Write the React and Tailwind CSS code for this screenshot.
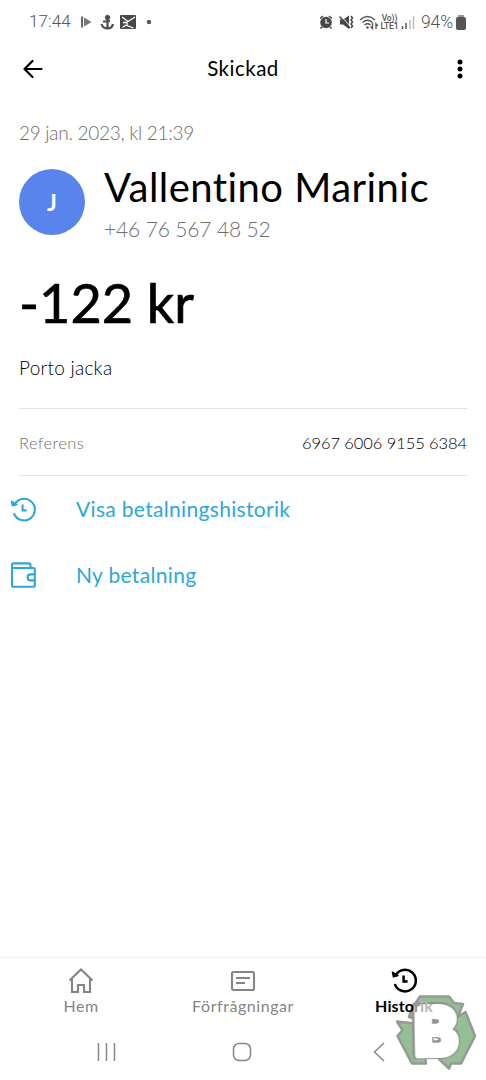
import React from "react";

const HistoryIcon = ({ className, strokeWidth = 2.1 }) => (
  <svg
    className={className}
    viewBox="0 0 26 26"
    fill="none"
    stroke="currentColor"
    strokeWidth={strokeWidth}
    strokeLinecap="round"
    strokeLinejoin="round"
  >
    <path d="M4.6 8.4A10.8 10.8 0 1 1 4.2 18" />
    <path d="M1.4 5.2 2.4 9.8 7 8.6Z" fill="currentColor" strokeWidth="1.4" />
    <path d="M12.6 8.4V14.4H16.6" strokeLinecap="butt" strokeLinejoin="miter" />
  </svg>
);

const WalletIcon = () => (
  <svg
    className="h-[26px] w-[26px]"
    viewBox="0 0 26 26"
    fill="none"
    stroke="currentColor"
    strokeWidth="2.1"
    strokeLinejoin="round"
  >
    <path d="M20.5 6V2.8Q20.5 1.4 19.1 1.4H3.4Q2 1.4 2 2.8V23.2Q2 24.8 3.6 24.8H23.2Q24.8 24.8 24.8 23.2V7.4Q24.8 6 23.4 6H2.4" />
    <path d="M24.8 12.4H20.6A3 3 0 0 0 20.6 18.4H24.8" />
  </svg>
);

const StatusBar = () => (
  <header className="flex h-[44px] items-center pl-[29px] pr-5 text-[#555]">
    <span className="w-[42px] font-[Roboto] text-[17px] font-light tracking-[0.1px]">
      17:44
    </span>
    <svg className="ml-[8px] h-5 w-[76px]" viewBox="0 0 76 20">
      <path d="M3 4.5V15.5" stroke="#555" strokeWidth="1.8" />
      <path d="M5 5.5 12.500 10 5 14.5Z" fill="#777" />
      <g fill="none" stroke="#4c4c4c" strokeWidth="2.2">
        <circle cx="28.500" cy="5.500" r="2.200" fill="#4c4c4c" strokeWidth="1" />
        <path d="M28.500 7V16M24 9.500 31 9M22.500 12Q24 16.500 28.500 16.500T34 12" />
      </g>
      <rect x="41" y="3" width="16" height="14" rx="1" fill="#484848" />
      <path
        d="M43 5 49 9.500 56 5M44 10.500H48V13.500L54.500 16M43.500 15.500 47 13"
        fill="none"
        stroke="white"
        strokeWidth="1.3"
      />
      <circle cx="70" cy="10" r="2.2" fill="#555" />
    </svg>
    <div className="ml-auto flex items-center">
      <svg className="h-5 w-[60px]" viewBox="0 0 60 20">
        <circle cx="6" cy="10.500" r="5.800" fill="#484848" />
        <path d="M0 6.500 3 4M9 4 12 6.500M2 15 .5 16.500M10 15 11.500 16.500" stroke="#484848" strokeWidth="1.600" />
        <path d="M6 7V11H9" fill="none" stroke="white" strokeWidth="1.200" />
        <path d="M20 7.500H23L29 3.500V17L23 12.500H20Z" fill="#484848" />
        <path d="M20.500 3.500 31 15" stroke="white" strokeWidth="1" />
        <path d="M19.500 4.500 30 16" stroke="#484848" strokeWidth="1.500" />
        <path d="M31 4 32.500 6 31 8 32.500 10 31 12 32.500 14 31 16" fill="none" stroke="#484848" strokeWidth="1.500" />
        <g fill="none" stroke="#555" strokeWidth="1.400">
          <path d="M40 8Q47.500 1 55 8M42.500 10.500Q47.500 6 52.500 10.500M44.500 13Q47.500 10.500 50.500 13" />
          <path d="M52.500 11V16.500L50.500 14.500M56 17V12L58 14" />
        </g>
        <circle cx="47.500" cy="15.500" r="1.300" fill="#555" />
      </svg>
      <div className="w-[19px] text-center font-[Roboto] text-[8.5px] leading-[8px] font-medium tracking-[-0.1px]">
        Vo))
        <br />
        LTE1
      </div>
      <svg className="ml-[2px] h-5 w-[14px]" viewBox="0 0 14 20" fill="none" strokeWidth="1.500">
        <path d="M1.500 14V17M5 11V17" stroke="#555" />
        <path d="M9 8V17M12.500 4V17" stroke="#bbb" />
      </svg>
      <span className="ml-[6px] w-[35px] font-[Roboto] text-[17.5px] font-light tracking-[-0.1px]">
        94%
      </span>
      <span className="relative mt-[2px] h-[13px] w-[10px] rounded-[2px] bg-[#555] before:absolute before:-top-[2px] before:left-[2px] before:h-[2px] before:w-[6px] before:bg-[#999]" />
    </div>
  </header>
);

const TopBar = () => (
  <div className="flex h-[50px] items-center justify-between px-[23px]">
    <svg className="h-5 w-5" viewBox="0 0 20 20" fill="none" stroke="black" strokeWidth="2.2" strokeLinecap="round" strokeLinejoin="round">
      <path d="M9.500 2 1.500 10 9.500 18M1.500 10H18.500" />
    </svg>
    <h1 className="-mt-[2px] text-[20.5px] tracking-[0.5px]">Skickad</h1>
    <svg className="h-5 w-5" viewBox="0 0 20 20">
      <circle cx="17" cy="3" r="2.500" />
      <circle cx="17" cy="10" r="2.500" />
      <circle cx="17" cy="17" r="2.500" />
    </svg>
  </div>
);

const Badge = () => (
  <svg
    className="absolute top-[990px] left-[390px] h-[86px] w-[92px] overflow-visible"
    viewBox="390 990 92 86"
  >
    <g fill="#94bf95" stroke="#959a95" strokeWidth="2.600" strokeLinejoin="round">
      <path d="M420 996.500H449L454 1003 463 1004 457 1019 430 1022 409 1017 412 1009Z" />
      <path d="M397 1021.500 419 1024 426 1063.500H412L397.500 1036 402.500 1030Z" />
      <path d="M456 1018 465.500 1012 475 1036 461 1063.500H451L449 1068.500 439 1059 446 1046Z" />
    </g>
    <text
      x="414"
      y="1055"
      transform="rotate(-1 438 1032)"
      fontFamily="Inter"
      fontWeight="800"
      fontSize="66"
      fill="white"
      stroke="white"
      strokeWidth="6"
      strokeLinejoin="round"
      className="[filter:drop-shadow(1.5px_0_0_#929292)_drop-shadow(-1.5px_0_0_#929292)_drop-shadow(0_1.5px_0_#929292)_drop-shadow(0_-1.5px_0_#929292)]"
    >
      B
    </text>
  </svg>
);

const App = () => {
  return (
    <div className="relative flex h-[1080px] w-[486px] flex-col overflow-hidden bg-white font-[Lato,sans-serif] text-black">
      <StatusBar />
      <TopBar />
      <main className="flex-1 px-[19px]">
        <p className="mt-[25px] h-[28px] text-[19px] leading-[28px] font-light tracking-[-0.28px] whitespace-nowrap text-[#6f6f6f]">
          29 jan. 2023, kl 21:39
        </p>
        <div className="mt-[18px] flex h-[80px] items-start">
          <div className="mt-[4px] flex h-[66px] w-[66px] items-center justify-center rounded-full bg-[#5884ec] text-[23px] font-bold text-white">
            J
          </div>
          <div className="-mt-[1px] ml-[19px] whitespace-nowrap">
            <h2 className="h-[46px] text-[40px] leading-[46px] tracking-[0.45px]">
              Vallentino Marinic
            </h2>
            <p className="mt-px text-[21px] leading-[36px] font-light tracking-[-0.15px] text-[#6f6f6f]">
              +46 76 567 48 52
            </p>
          </div>
        </div>
        <p className="mt-[24px] h-[68px] text-[54px] leading-[68px] whitespace-nowrap [-webkit-text-stroke:0.7px_black]">
          -122 kr
        </p>
        <p className="mt-[18px] h-[26px] text-[19px] leading-[26px] font-light tracking-[0.25px]">
          Porto jacka
        </p>
        <div className="mt-[27px] flex h-[68px] items-center justify-between border-y-[1.5px] border-[#e2e2e2] pt-[2px] whitespace-nowrap">
          <span className="text-[16.5px] font-light tracking-[0.4px] text-[#6f6f6f]">Referens</span>
          <span className="text-[16.5px] font-light tracking-[-0.08px]">6967 6006 9155 6384</span>
        </div>
        <div className="-ml-[9px] text-[21px] tracking-[0.32px] text-[#2ca8d8]">
          <div className="flex h-[66px] items-center">
            <HistoryIcon className="h-[26px] w-[26px]" />
            <span className="ml-10">Visa betalningshistorik</span>
          </div>
          <div className="flex h-[66px] items-center">
            <WalletIcon />
            <span className="ml-10">Ny betalning</span>
          </div>
        </div>
      </main>
      <nav className="grid h-[68px] grid-cols-3 border-t border-[#f2f2f2] text-[16px] tracking-[0.55px] text-[#858585]">
        <div className="flex flex-col items-center pt-[9px]">
          <svg className="h-[28px] w-[26px]" viewBox="0 0 26 28" fill="none" stroke="currentColor" strokeWidth="2.1">
            <path d="M1.500 13.500 13 2.500 24.500 13.500M4 12V25H10V18H16V25H22V12" />
          </svg>
          <span className="leading-[22px]">Hem</span>
        </div>
        <div className="flex flex-col items-center pt-[9px]">
          <svg className="h-[28px] w-[26px]" viewBox="0 0 26 28" fill="none" stroke="currentColor" strokeWidth="2.1">
            <rect x="2" y="5" width="22" height="18" rx="1.500" />
            <path d="M6 11H20M6 16H15" />
          </svg>
          <span className="leading-[22px]">Förfrågningar</span>
        </div>
        <div className="flex flex-col items-center pt-[9px] pr-[2px] text-black">
          <HistoryIcon className="mb-[2px] h-[26px] w-[26px]" strokeWidth={2.5} />
          <span className="leading-[22px] font-bold tracking-[0.1px]">
            Hist<span className="relative z-10">o</span>
            <span className="relative z-10 text-[#8d938d]">r</span>
            <span className="relative z-10 text-[#b5b8b5]">ik</span>
          </span>
        </div>
      </nav>
      <div className="flex h-[55px] items-start pt-[17px] pl-[97px] text-[#888]">
        <svg className="h-5 w-5" viewBox="0 0 20 20" stroke="currentColor" strokeWidth="1.500">
          <path d="M1.500 1V19M9.500 1V19M17.500 1V19" />
        </svg>
        <svg className="ml-[115px] h-5 w-5" viewBox="0 0 20 20" fill="none" stroke="currentColor" strokeWidth="1.500">
          <rect x="1.500" y="1.500" width="17" height="17" rx="5.500" />
        </svg>
        <svg className="ml-[121px] h-5 w-3" viewBox="0 0 12 20" fill="none" stroke="currentColor" strokeWidth="1.500">
          <path d="M11 1 1.500 10 11 19" />
        </svg>
      </div>
      <Badge />
    </div>
  );
};

export default App;
